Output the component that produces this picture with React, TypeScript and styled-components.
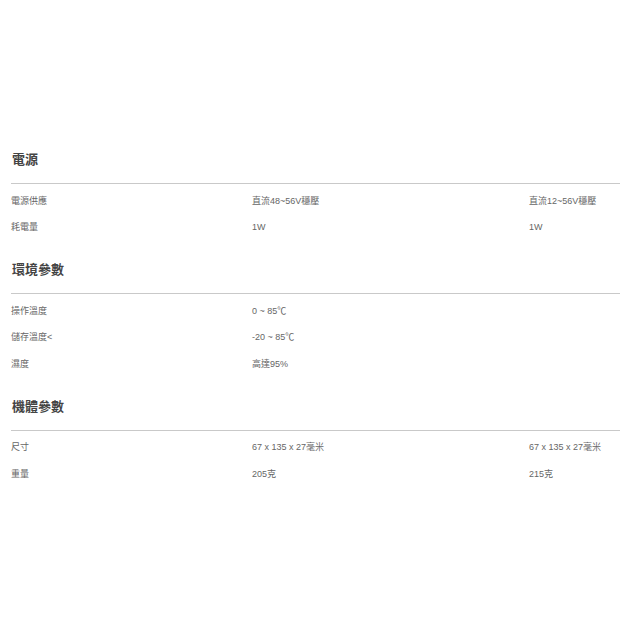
import styled, { createGlobalStyle } from "styled-components";

interface Spec {
	label: string;
	values: string[];
}

interface Section {
	title: string;
	rows: Spec[];
}

const sections: Section[] = [
	{
		title: "電源",
		rows: [
			{ label: "電源供應", values: ["直流48~56V穩壓", "直流12~56V穩壓"] },
			{ label: "耗電量", values: ["1W", "1W"] },
		],
	},
	{
		title: "環境參數",
		rows: [
			{ label: "操作溫度", values: ["0 ~ 85℃"] },
			{ label: "儲存溫度<", values: ["-20 ~ 85℃"] },
			{ label: "濕度", values: ["高達95%"] },
		],
	},
	{
		title: "機體參數",
		rows: [
			{ label: "尺寸", values: ["67 x 135 x 27毫米", "67 x 135 x 27毫米"] },
			{ label: "重量", values: ["205克", "215克"] },
		],
	},
];

const GlobalStyle = createGlobalStyle`
	body {
		margin: 0;
		background: #fff;
		font-family: "Liberation Sans", Arial, "Noto Sans CJK TC", sans-serif;
	}
`;

const Page = styled.div`
	padding: 150px 0 0 11px;
	overflow: hidden;
`;

const Block = styled.section`
	margin-bottom: 20px;
`;

const Title = styled.h2`
	margin: 0;
	padding-left: 1px;
	font-size: 13px;
	line-height: 20px;
	font-weight: bold;
	color: #444;
	padding-bottom: 13px;
	border-bottom: 1px solid #c9c9c9;
`;

const Rows = styled.div`
	padding-top: 3px;
`;

const Row = styled.div`
	display: grid;
	grid-template-columns: 241px 277px 1fr;
	height: 26.5px;
	align-items: center;
	font-size: 9px;
	color: #666;
`;

const Cell = styled.span`
	white-space: nowrap;
`;

export default function App() {
	return (
		<>
			<GlobalStyle />
			<Page>
				{sections.map((s) => (
					<Block key={s.title}>
						<Title>{s.title}</Title>
						<Rows>
							{s.rows.map((r) => (
								<Row key={r.label}>
									<Cell>{r.label}</Cell>
									{r.values.map((v, i) => (
										<Cell key={i}>{v}</Cell>
									))}
								</Row>
							))}
						</Rows>
					</Block>
				))}
			</Page>
		</>
	);
}
